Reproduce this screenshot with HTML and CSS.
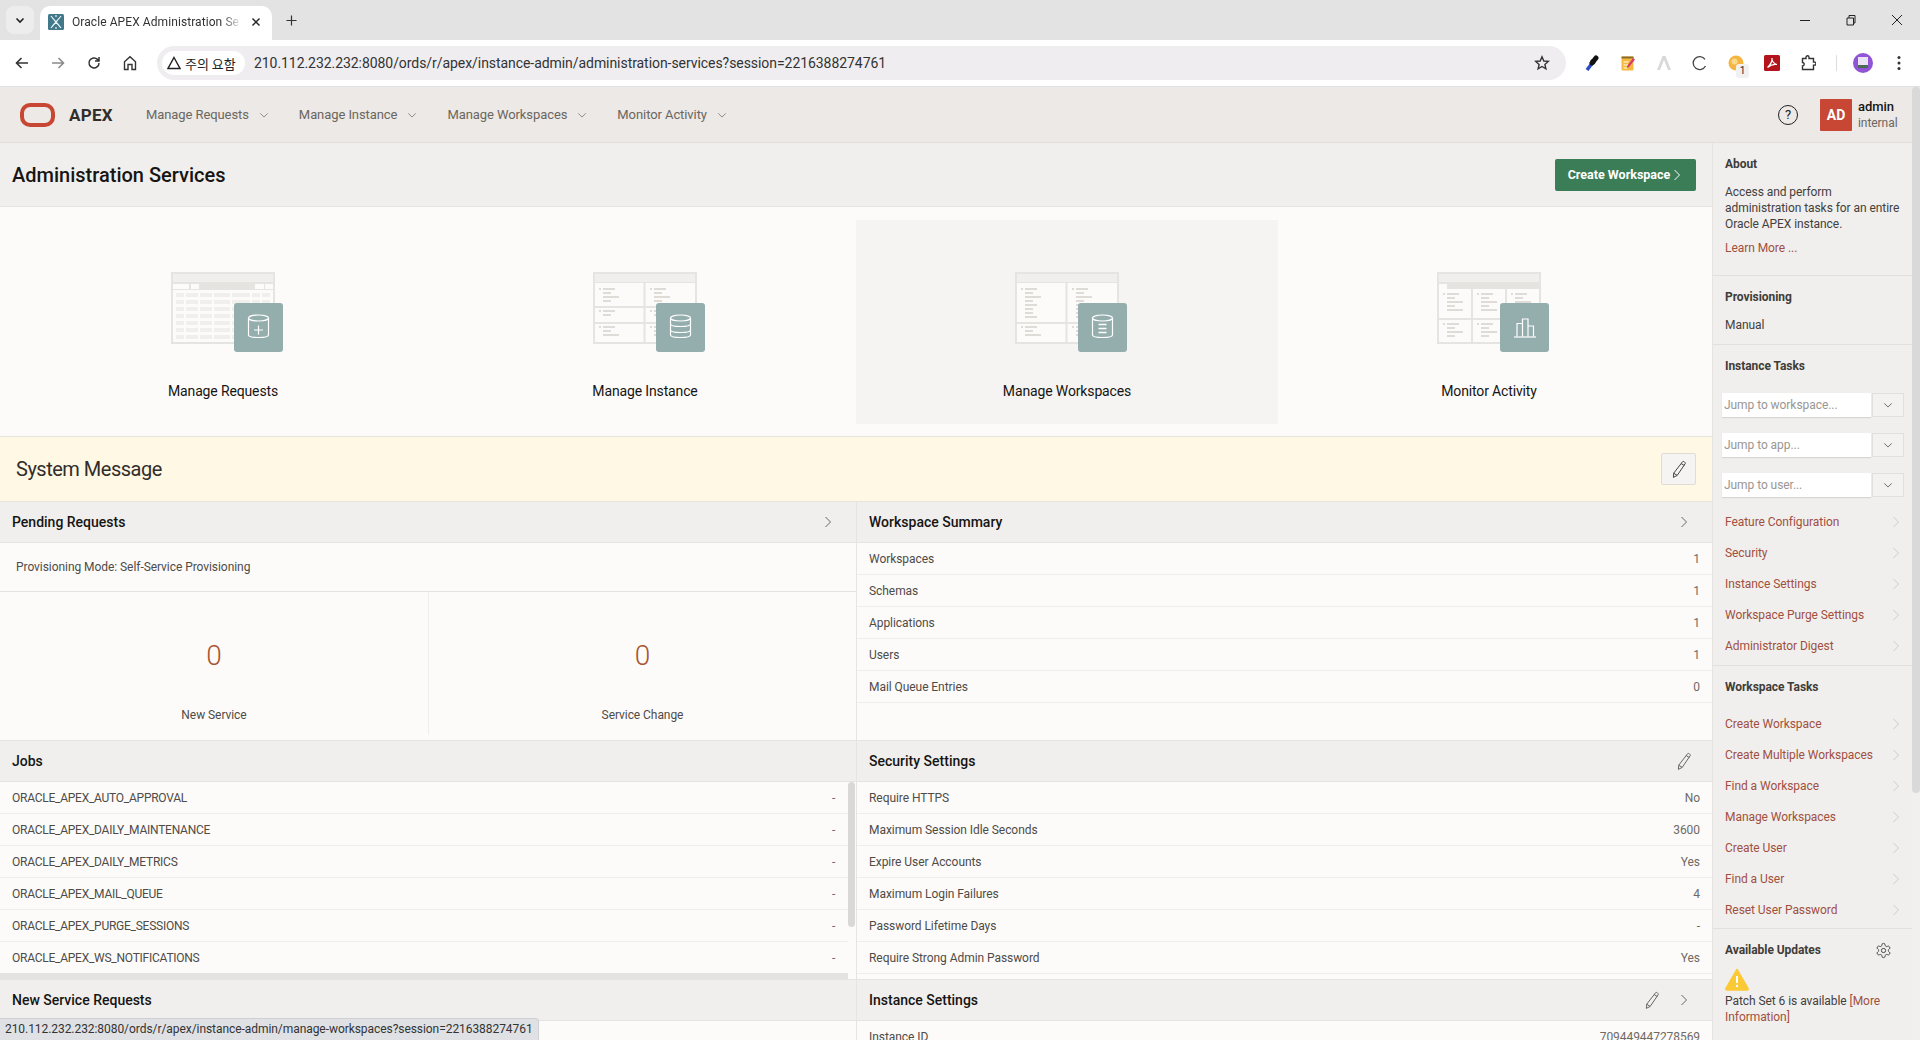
FILE: index.html
```html
<!DOCTYPE html>
<html lang="en">
<head>
<meta charset="utf-8">
<title>Oracle APEX Administration Services</title>
<link rel="stylesheet" href="styles.css">
</head>
<body>
<svg class="defs" aria-hidden="true">
  <symbol id="chev-r" viewBox="0 0 12 12"><path d="M3.500 1 8.500 6l-5 5" fill="none" stroke="currentColor" stroke-width="1"/></symbol>
  <symbol id="chev-d" viewBox="0 0 12 12"><path d="M1.500 4 6 8.500 10.500 4" fill="none" stroke="currentColor" stroke-width="1"/></symbol>
  <symbol id="pencil" viewBox="0 0 18 18"><path d="M12.700 1.600c.8-.6 2.700.5 2.600 1.900L7.200 15.400l-3.800 2 .3-4.200zM11.200 3.600l3.100 1.900M3.700 13.200l3.500 2.200" fill="none" stroke="currentColor" stroke-width="1"/></symbol>
  <g id="g-frame" fill="none">
    <rect x="1" y="1" width="102" height="70" fill="#fcfbfa" stroke="#e6e4e1" stroke-width="2"/>
    <rect x="2" y="2" width="100" height="8" fill="#f0efed"/>
    <rect x="2" y="10" width="100" height="1" fill="#e6e4e1"/>
  </g>
  <path id="l4" d="M6 17h2M10 17h12M10 21h8M10 25h16M10 29h8" fill="none" stroke="#d5d1cb" stroke-width="1.500"/>
  <path id="l2" d="M6 17h2M10 17h12M10 21h8" fill="none" stroke="#d5d1cb" stroke-width="1.500"/>
  <path id="l3" d="M6 17h2M10 17h12M10 21h8M10 25h16" fill="none" stroke="#d5d1cb" stroke-width="1.500"/>
  <path id="l5" d="M6 17h2M10 17h12M10 21h8M10 25h16M10 29h8M10 33h16" fill="none" stroke="#d5d1cb" stroke-width="1.500"/>
  <path id="l8" d="M6 17h2M10 17h12M10 21h8M10 25h16M10 29h8M10 33h12M10 37h8M10 41h8M10 45h12" fill="none" stroke="#d5d1cb" stroke-width="1.500"/>
  <rect id="badge" x="71" y="31" width="49" height="49" rx="3" fill="#94adad"/>
</svg>

<header class="tabstrip">
  <span class="tab-list"><svg class="ic12" viewBox="0 0 12 12"><path d="M2.500 4.500 6 8l3.500-3.500" fill="none" stroke="#222" stroke-width="1.600"/></svg></span>
  <div class="tab">
    <svg class="favicon" viewBox="0 0 16 16"><rect width="16" height="16" rx="1.500" fill="#41788a"/><path d="M3 2c3 4 7 8 10 12M13 2C10 6 6 10 3 14M8 1v2M8 13v2" fill="none" stroke="#e8f2f4" stroke-width="1.200"/></svg>
    <span class="tab-title">Oracle APEX Administration Se</span>
    <svg class="ic12" viewBox="0 0 12 12"><path d="M2.500 2.500l7 7M9.500 2.500l-7 7" stroke="#222" stroke-width="1.400"/></svg>
  </div>
  <svg class="newtab" viewBox="0 0 12 12"><path d="M6 .5v11M.5 6h11" stroke="#333" stroke-width="1.300"/></svg>
  <div class="winctl">
    <svg class="ic12" viewBox="0 0 12 12"><path d="M1 6.500h10" stroke="#222"/></svg>
    <svg class="ic12" viewBox="0 0 12 12"><path d="M2 4h6.500v7H2zM4 4V1.500h6V9H8.500" fill="none" stroke="#222"/></svg>
    <svg class="ic12" viewBox="0 0 12 12"><path d="M1 1l10 10M11 1 1 11" stroke="#222"/></svg>
  </div>
</header>

<div class="toolbar">
  <div class="navbtns">
    <svg class="tb-ic" viewBox="0 0 16 16"><path d="M14 8H3M7.500 3 2.500 8l5 5" fill="none" stroke="#333" stroke-width="1.600"/></svg>
    <svg class="tb-ic" viewBox="0 0 16 16"><path d="M2 8h11M8.500 3l5 5-5 5" fill="none" stroke="#8a8a8a" stroke-width="1.600"/></svg>
    <svg class="tb-ic" viewBox="0 0 16 16"><path d="M13 8a5 5 0 1 1-1.500-3.600L13 6M13 2v4H9" fill="none" stroke="#333" stroke-width="1.500"/></svg>
    <svg class="tb-ic" viewBox="0 0 16 16"><path d="M2.500 14.500V6.800L8 1.800l5.500 5v7.700H10V9.500H6v5z" fill="none" stroke="#333" stroke-width="1.400"/></svg>
  </div>
  <div class="omnibox">
    <span class="chip"><svg class="chip-ic" viewBox="0 0 14 14"><path d="M7 1.500 13 12.500H1z" fill="none" stroke="#222" stroke-width="1.400"/></svg>주의 요함</span>
    <span class="url">210.112.232.232:8080/ords/r/apex/instance-admin/administration-services?session=2216388274761</span>
    <svg class="star" viewBox="0 0 16 16"><path d="M8 1.800 9.800 6l4.500.4-3.400 3 1 4.400L8 11.500l-3.900 2.300 1-4.400-3.400-3L6.200 6z" fill="none" stroke="#333" stroke-width="1.400"/></svg>
  </div>
  <div class="exts">
    <svg class="tb-ic" viewBox="0 0 16 16"><path d="M3 15 9 7" stroke="#2a4fc4" stroke-width="3.500" fill="none"/><path d="M8 8 12 3" stroke="#111" stroke-width="5" stroke-linecap="round" fill="none"/><path d="M7 5l4 3.500" stroke="#111" stroke-width="2" fill="none"/></svg>
    <svg class="tb-ic" viewBox="0 0 16 16"><rect x="1.500" y="1.500" width="12" height="14" rx="1" fill="#f5b93e"/><path d="M1.500 1.500h12v2h-12z" fill="#8a6d2b"/><path d="M3.500 7h5M3.500 10h5M3.500 13h4" stroke="#fff"/><path d="M13 3 15 4.500 9 12l-2 1 .5-2.500z" fill="#d83b6a"/></svg>
    <svg class="tb-ic" viewBox="0 0 16 16"><path d="M6.500 1h3L15 15h-3L8 5 4 15H1z" fill="#d9d9d9"/></svg>
    <svg class="tb-ic" viewBox="0 0 16 16"><path d="M13 4.300A6.500 6.500 0 1 0 13.500 11" fill="none" stroke="#444" stroke-width="1.300"/></svg>
    <span class="ext-badged"><svg class="tb-ic" viewBox="0 0 16 16"><circle cx="8" cy="8" r="7.500" fill="#f5b53f"/><circle cx="6.500" cy="6.500" r="3" fill="#fbd98c"/></svg><span class="ext-count">1</span></span>
    <svg class="tb-ic" viewBox="0 0 16 16"><rect width="16" height="16" rx="1.500" fill="#b3131b"/><path d="M3.500 12.500C6 10 8.500 6 8 3c-.5 3 2 6 5 6.500-3-.5-6.500.5-9.500 3z" fill="none" stroke="#fff" stroke-width="1.200"/></svg>
    <svg class="tb-ic" viewBox="0 0 16 16"><path d="M2.500 3.500H6V2.200a1.500 1.500 0 0 1 3 0v1.300h4.500v3.600h1a1.500 1.500 0 0 1 0 3h-1v4.400h-11v-3.600a1.700 1.700 0 0 0 0-3.400z" fill="none" stroke="#333" stroke-width="1.400"/></svg>
    <span class="ext-sep"></span>
    <svg class="avatar-ic" viewBox="0 0 20 20"><circle cx="10" cy="10" r="10" fill="#9254d6"/><rect x="5" y="4" width="10" height="11" fill="#e9e3f5"/><rect x="5" y="12" width="10" height="3" fill="#4a6a55"/></svg>
    <svg class="tb-ic kebab" viewBox="0 0 16 16"><circle cx="8" cy="2.500" r="1.500" fill="#333"/><circle cx="8" cy="8" r="1.500" fill="#333"/><circle cx="8" cy="13.500" r="1.500" fill="#333"/></svg>
  </div>
</div>

<div class="app-header">
  <a class="brand"><span class="o-ring"></span><span class="brand-name">APEX</span></a>
  <nav class="menu">
    <a class="menu-item">Manage Requests <svg class="ic10"><use href="#chev-d"/></svg></a>
    <a class="menu-item">Manage Instance <svg class="ic10"><use href="#chev-d"/></svg></a>
    <a class="menu-item">Manage Workspaces <svg class="ic10"><use href="#chev-d"/></svg></a>
    <a class="menu-item">Monitor Activity <svg class="ic10"><use href="#chev-d"/></svg></a>
  </nav>
  <span class="help">?</span>
  <span class="user-badge">AD</span>
  <span class="user"><b>admin</b><i>internal</i></span>
</div>

<div class="shell">
  <main class="main">
    <div class="title-bar">
      <h1>Administration Services</h1>
      <button class="btn-create">Create Workspace <svg class="ic12"><use href="#chev-r"/></svg></button>
    </div>

    <div class="cards">
      <a class="card">
        <svg class="card-art" viewBox="0 0 120 80">
          <g transform="translate(8)">
            <use href="#g-frame"/>
            <rect x="2" y="11" width="100" height="7" fill="#e6e4e1"/>
            <path d="M2 14.500h16M20 14.500h8M84 14.500h9M94 14.500h8" stroke="#fcfbfa" stroke-width="5"/>
            <path d="M5 23h94M5 30h94M5 37h94M5 44h94M5 51h94M5 58h94M5 65h94" stroke="#f0efed" stroke-width="4" stroke-dasharray="8 2 12 2 12 2 16 2 18 2 8 2 8 9"/>
          </g>
          <use href="#badge"/>
          <g fill="none" stroke="#fff" stroke-width="1.200"><ellipse cx="95.500" cy="46" rx="10" ry="3"/><path d="M85.500 46v17c0 1.500 2 2.500 10 2.500s10-1 10-2.500V46M91 58h9M95.500 53.500v9"/></g>
        </svg>
        <span class="card-label">Manage Requests</span>
      </a>
      <a class="card">
        <svg class="card-art" viewBox="0 0 120 80">
          <g transform="translate(8)">
            <use href="#g-frame"/>
            <path d="M51.500 11v59M2 35h100M2 51h100" stroke="#e6e4e1" stroke-width="2"/>
            <use href="#l4"/><use href="#l4" x="51"/>
            <use href="#l2" y="22"/><use href="#l2" x="51" y="22"/>
            <use href="#l3" y="38"/><use href="#l3" x="51" y="38"/>
          </g>
          <use href="#badge"/>
          <g fill="none" stroke="#fff" stroke-width="1.200"><ellipse cx="95.500" cy="46" rx="10" ry="3"/><path d="M85.500 46v17c0 1.500 2 2.500 10 2.500s10-1 10-2.500V46M85.500 52c0 1.500 2 2.500 10 2.500s10-1 10-2.500M85.500 58c0 1.500 2 2.500 10 2.500s10-1 10-2.500"/></g>
        </svg>
        <span class="card-label">Manage Instance</span>
      </a>
      <a class="card card-hover">
        <svg class="card-art" viewBox="0 0 120 80">
          <g transform="translate(8)">
            <use href="#g-frame"/>
            <path d="M51.500 11v59M2 51h100" stroke="#e6e4e1" stroke-width="2"/>
            <use href="#l8"/><use href="#l8" x="51"/>
            <use href="#l3" y="38"/><use href="#l3" x="51" y="38"/>
          </g>
          <use href="#badge"/>
          <g fill="none" stroke="#fff" stroke-width="1.200"><ellipse cx="95.500" cy="46" rx="10" ry="3"/><path d="M85.500 46v17c0 1.500 2 2.500 10 2.500s10-1 10-2.500V46"/><path d="M91.500 52.500h8M91.500 56.500h8M91.500 60.500h8" stroke-width="1.500"/></g>
        </svg>
        <span class="card-label">Manage Workspaces</span>
      </a>
      <a class="card">
        <svg class="card-art" viewBox="0 0 120 80">
          <g transform="translate(8)">
            <use href="#g-frame"/>
            <rect x="2" y="11" width="100" height="6" fill="#e6e4e1"/>
            <rect x="2" y="12" width="8" height="5" fill="#fcfbfa"/>
            <path d="M35 17v53M69 17v53M2 47h100" stroke="#e6e4e1" stroke-width="2"/>
            <use href="#l5" y="5"/><use href="#l5" x="34" y="5"/><use href="#l5" x="68" y="5"/>
            <use href="#l4" y="35"/><use href="#l4" x="34" y="35"/>
          </g>
          <use href="#badge"/>
          <g fill="none" stroke="#fff" stroke-width="1.200"><path d="M85 65h22"/><path d="M88 64.500V51.500h5.500v13M93.500 64.500V47h5.500v17.500M99 64.500V54h5.500v10.500"/></g>
        </svg>
        <span class="card-label">Monitor Activity</span>
      </a>
    </div>

    <div class="sysmsg">
      <h2>System Message</h2>
      <button class="btn-edit"><svg class="ic18"><use href="#pencil"/></svg></button>
    </div>

    <div class="panels">
      <section class="panel">
        <div class="panel-head"><h3>Pending Requests</h3><svg class="ic12 muted"><use href="#chev-r"/></svg></div>
        <p class="prov-mode">Provisioning Mode: Self-Service Provisioning</p>
        <div class="stats">
          <div class="stat"><span class="stat-num">0</span><span class="stat-label">New Service</span></div>
          <div class="stat"><span class="stat-num">0</span><span class="stat-label">Service Change</span></div>
        </div>
      </section>

      <section class="panel">
        <div class="panel-head"><h3>Workspace Summary</h3><svg class="ic12 muted"><use href="#chev-r"/></svg></div>
        <ul class="rows">
          <li>Workspaces<span>1</span></li>
          <li>Schemas<span>1</span></li>
          <li>Applications<span>1</span></li>
          <li>Users<span>1</span></li>
          <li>Mail Queue Entries<span>0</span></li>
        </ul>
      </section>

      <section class="panel panel-scroll">
        <div class="panel-head"><h3>Jobs</h3></div>
        <ul class="rows rows-jobs">
          <li>ORACLE_APEX_AUTO_APPROVAL<span>-</span></li>
          <li>ORACLE_APEX_DAILY_MAINTENANCE<span>-</span></li>
          <li>ORACLE_APEX_DAILY_METRICS<span>-</span></li>
          <li>ORACLE_APEX_MAIL_QUEUE<span>-</span></li>
          <li>ORACLE_APEX_PURGE_SESSIONS<span>-</span></li>
          <li>ORACLE_APEX_WS_NOTIFICATIONS<span>-</span></li>
        </ul>
        <span class="vthumb"></span>
        <span class="hthumb"></span>
      </section>

      <section class="panel">
        <div class="panel-head"><h3>Security Settings</h3><svg class="ic18 muted pencil-end"><use href="#pencil"/></svg></div>
        <ul class="rows">
          <li>Require HTTPS<span>No</span></li>
          <li>Maximum Session Idle Seconds<span>3600</span></li>
          <li>Expire User Accounts<span>Yes</span></li>
          <li>Maximum Login Failures<span>4</span></li>
          <li>Password Lifetime Days<span>-</span></li>
          <li>Require Strong Admin Password<span>Yes</span></li>
        </ul>
      </section>

      <section class="panel">
        <div class="panel-head"><h3>New Service Requests</h3></div>
      </section>

      <section class="panel">
        <div class="panel-head"><h3>Instance Settings</h3><span class="head-actions"><svg class="ic18 muted"><use href="#pencil"/></svg><svg class="ic12 muted"><use href="#chev-r"/></svg></span></div>
        <ul class="rows">
          <li>Instance ID<span>709449447278569</span></li>
        </ul>
      </section>
    </div>
  </main>

  <aside class="side">
    <section class="side-sec sec-about">
      <h4>About</h4>
      <p>Access and perform administration tasks for an entire Oracle APEX instance.</p>
      <a class="learn">Learn More ...</a>
    </section>
    <section class="side-sec sec-prov">
      <h4>Provisioning</h4>
      <p>Manual</p>
    </section>
    <section class="side-sec sec-inst">
      <h4>Instance Tasks</h4>
      <div class="jumps">
        <div class="jump"><span class="jump-field">Jump to workspace...</span><span class="jump-btn"><svg class="ic10"><use href="#chev-d"/></svg></span></div>
        <div class="jump"><span class="jump-field">Jump to app...</span><span class="jump-btn"><svg class="ic10"><use href="#chev-d"/></svg></span></div>
        <div class="jump"><span class="jump-field">Jump to user...</span><span class="jump-btn"><svg class="ic10"><use href="#chev-d"/></svg></span></div>
      </div>
      <ul class="links">
        <li>Feature Configuration<svg class="ic12"><use href="#chev-r"/></svg></li>
        <li>Security<svg class="ic12"><use href="#chev-r"/></svg></li>
        <li>Instance Settings<svg class="ic12"><use href="#chev-r"/></svg></li>
        <li>Workspace Purge Settings<svg class="ic12"><use href="#chev-r"/></svg></li>
        <li>Administrator Digest<svg class="ic12"><use href="#chev-r"/></svg></li>
      </ul>
    </section>
    <section class="side-sec sec-work">
      <h4>Workspace Tasks</h4>
      <ul class="links">
        <li>Create Workspace<svg class="ic12"><use href="#chev-r"/></svg></li>
        <li>Create Multiple Workspaces<svg class="ic12"><use href="#chev-r"/></svg></li>
        <li>Find a Workspace<svg class="ic12"><use href="#chev-r"/></svg></li>
        <li>Manage Workspaces<svg class="ic12"><use href="#chev-r"/></svg></li>
        <li>Create User<svg class="ic12"><use href="#chev-r"/></svg></li>
        <li>Find a User<svg class="ic12"><use href="#chev-r"/></svg></li>
        <li>Reset User Password<svg class="ic12"><use href="#chev-r"/></svg></li>
      </ul>
    </section>
    <section class="side-sec sec-upd">
      <div class="upd-head"><h4>Available Updates</h4>
        <svg class="gear" viewBox="0 0 24 24"><path d="M12.220 2h-.44a2 2 0 0 0-2 2v.18a2 2 0 0 1-1 1.730l-.43.25a2 2 0 0 1-2 0l-.15-.08a2 2 0 0 0-2.730.73l-.22.38a2 2 0 0 0 .73 2.730l.15.1a2 2 0 0 1 1 1.720v.51a2 2 0 0 1-1 1.740l-.15.09a2 2 0 0 0-.73 2.730l.22.38a2 2 0 0 0 2.730.73l.15-.08a2 2 0 0 1 2 0l.43.25a2 2 0 0 1 1 1.730V20a2 2 0 0 0 2 2h.44a2 2 0 0 0 2-2v-.18a2 2 0 0 1 1-1.730l.43-.25a2 2 0 0 1 2 0l.15.08a2 2 0 0 0 2.730-.73l.22-.39a2 2 0 0 0-.73-2.730l-.15-.08a2 2 0 0 1-1-1.740v-.5a2 2 0 0 1 1-1.740l.15-.09a2 2 0 0 0 .73-2.730l-.22-.38a2 2 0 0 0-2.730-.73l-.15.08a2 2 0 0 1-2 0l-.43-.25a2 2 0 0 1-1-1.730V4a2 2 0 0 0-2-2z" fill="none" stroke="#403c38" stroke-width="1.300"/><circle cx="12" cy="12" r="3" fill="none" stroke="#403c38" stroke-width="1.300"/></svg>
      </div>
      <svg class="warn" viewBox="0 0 24 24"><path d="M12 2.500 23 21.500a1 1 0 0 1-1 1.500H2a1 1 0 0 1-1-1.500z" fill="#fbc935" stroke="#fbc935" stroke-linejoin="round" stroke-width="1.500"/><path d="M12 9v7" stroke="#fff" stroke-width="2"/><circle cx="12" cy="19" r="1.200" fill="#fff"/></svg>
      <p class="upd-text">Patch Set 6 is available <span class="upd-link">[More Information]</span></p>
    </section>
  </aside>
  <span class="page-track"></span>
</div>

<span class="page-thumb"></span>
<div class="status-bubble">210.112.232.232:8080/ords/r/apex/instance-admin/manage-workspaces?session=2216388274761</div>
</body>
</html>
```

FILE: styles.css
```css
* { box-sizing: border-box; }
html, body { margin: 0; height: 100%; overflow: hidden; }
body {
  display: flex; flex-direction: column; height: 1040px; position: relative;
  font-family: "Roboto", "Noto Sans", "Noto Sans CJK KR", sans-serif;
  font-size: 12px; color: #4f4b47; background: #fcfbfa; letter-spacing: -0.06px;
}
h1, h2, h3, h4, p, ul { margin: 0; padding: 0; }
ul { list-style: none; }
button { font: inherit; cursor: pointer; }
.defs { width: 0; height: 0; position: absolute; }
.ic10 { width: 10px; height: 10px; flex: none; }
.ic12 { width: 12px; height: 12px; flex: none; }
.ic18 { width: 18px; height: 18px; flex: none; }
.muted { color: #6b6660; }

/* browser chrome */
.tabstrip { height: 40px; background: #e3e3e3; display: flex; align-items: flex-end; padding-left: 6px; flex: none; }
.tab-list { width: 28px; height: 28px; margin-bottom: 6px; border-radius: 8px; background: #ededed; display: flex; align-items: center; justify-content: center; }
.tab { width: 232px; height: 34px; margin-left: 6px; background: #fff; border-radius: 10px 10px 0 0; display: flex; align-items: center; padding: 0 10px 2px 8px; gap: 8px; color: #333; }
.favicon { width: 16px; height: 16px; flex: none; }
.tab-title { flex: 1; white-space: nowrap; overflow: hidden; letter-spacing: .08px; -webkit-mask-image: linear-gradient(90deg, #000 88%, transparent); mask-image: linear-gradient(90deg, #000 88%, transparent); }
.newtab { width: 11px; height: 11px; margin: 0 0 14px 14px; }
.winctl { margin-left: auto; align-self: flex-start; display: flex; gap: 34px; padding: 14px 17px 0 0; }
.toolbar { height: 47px; background: #fff; display: flex; align-items: center; border-bottom: 1px solid #e0e0e0; padding-left: 14px; flex: none; }
.navbtns { display: flex; gap: 20px; }
.tb-ic { width: 16px; height: 16px; flex: none; display: block; }
.omnibox { width: 1409px; height: 34px; margin-left: 19px; background: #efedf0; border-radius: 17px; display: flex; align-items: center; padding-left: 5px; }
.chip { height: 24px; width: 83px; background: #fff; border-radius: 12px; display: flex; align-items: center; padding-left: 5px; gap: 4px; font-family: "Noto Sans CJK KR", sans-serif; font-size: 13px; color: #222; letter-spacing: 0; white-space: nowrap; }
.chip-ic { width: 14px; height: 14px; flex: none; }
.url { margin-left: 9px; font-size: 14px; color: #333; letter-spacing: -0.06px; }
.star { width: 16px; height: 16px; margin-left: auto; margin-right: 16px; }
.exts { display: flex; align-items: center; gap: 20px; margin-left: 18px; }
.ext-badged { position: relative; display: block; }
.ext-count { position: absolute; left: 8px; top: 9px; width: 13px; height: 14px; background: #f1f1f1; border-radius: 3px; font-size: 10px; text-align: center; color: #222; line-height: 14px; }
.ext-sep { width: 1px; height: 16px; background: #ddd; margin-right: -4px; }
.avatar-ic { width: 20px; height: 20px; flex: none; }
.kebab { margin-left: -2px; }

/* app header */
.app-header { height: 56px; flex: none; background: #ece9e6; border-bottom: 1px solid #e2dfdb; display: flex; align-items: center; padding: 0 20px 0 20px; }
.brand { display: flex; align-items: center; gap: 14px; }
.o-ring { width: 35px; height: 24px; border: 4px solid #c74634; border-radius: 10px; flex: none; }
.brand-name { font-size: 17px; font-weight: 700; color: #312d2a; letter-spacing: .3px; }
.menu { display: flex; gap: 30px; margin-left: 33px; }
.menu-item { font-size: 13px; color: #6b6660; display: flex; align-items: center; gap: 10px; letter-spacing: -0.08px; }
.menu-item .ic10 { color: #7d7872; }
.help { margin-left: auto; width: 20px; height: 20px; border: 1.500px solid #222; border-radius: 50%; font-size: 13px; display: flex; align-items: center; justify-content: center; color: #222; }
.user-badge { margin-left: 22px; width: 32px; height: 32px; background: #c74634; color: #fff; font-weight: 700; font-size: 14px; display: flex; align-items: center; justify-content: center; border-radius: 1px; }
.user { margin-left: 6px; display: flex; flex-direction: column; line-height: 16px; width: 42px; }
.user b { font-weight: 500; font-size: 13px; color: #161513; }
.user i { font-style: normal; color: #6b6660; font-size: 12px; }

/* shell */
.shell { flex: 1; display: flex; min-height: 0; position: relative; }
.main { width: 1712px; flex: none; display: flex; flex-direction: column; min-height: 0; }
.title-bar { height: 64px; flex: none; background: #f0efed; border-bottom: 1px solid #e6e4e1; display: flex; align-items: center; justify-content: space-between; padding: 4px 16px 4px 12px; }
h1 { font-size: 20px; font-weight: 500; color: #161513; letter-spacing: 0; }
.btn-create { height: 32px; width: 141px; background: #3a7d56; border: 0; border-radius: 2px; color: #fff; font-weight: 700; font-size: 12.500px; display: flex; align-items: center; justify-content: center; gap: 1px; letter-spacing: 0; }

.cards { display: grid; grid-template-columns: repeat(4, 422px); padding: 13px 12px 12px; flex: none; }
.card { height: 204px; display: flex; flex-direction: column; align-items: center; padding-top: 52px; }
.card-hover { background: #f5f4f2; }
.card-art { width: 120px; height: 80px; display: block; }
.card-label { margin-top: 29px; font-size: 14px; color: #161513; line-height: 20px; letter-spacing: -0.14px; }

.sysmsg { height: 65px; flex: none; background: #fff8e5; border-top: 1px solid #e6e4e1; display: flex; align-items: center; justify-content: space-between; padding: 0 16px; }
h2 { font-size: 20px; font-weight: 400; color: #312d2a; letter-spacing: -0.5px; }
.btn-edit { width: 35px; height: 32px; background: #f5f4f2; border: 1px solid #dfdcd8; border-radius: 2px; display: flex; align-items: center; justify-content: center; color: #444; padding: 0; }

.panels { display: grid; grid-template-columns: 856px 856px; grid-template-rows: 239px 239px 1fr; min-height: 0; flex: 1; }
.panel { position: relative; display: flex; flex-direction: column; overflow: hidden; min-height: 0; }
.panel:nth-child(even) { border-left: 1px solid #e6e4e1; }
.panel-head { height: 42px; flex: none; background: #f0efed; border-top: 1px solid #e6e4e1; border-bottom: 1px solid #e6e4e1; display: flex; align-items: center; justify-content: space-between; padding: 0 22px 0 12px; }
.pencil-end { margin-right: -3px; }
h3 { font-size: 14px; font-weight: 500; color: #161513; letter-spacing: 0; }
.head-actions { display: flex; align-items: center; gap: 17px; }
.prov-mode { height: 49px; flex: none; display: flex; align-items: center; padding-left: 16px; border-bottom: 1px solid #e6e4e1; }
.stats { flex: 1; display: grid; grid-template-columns: 428px 428px; padding-bottom: 5px; }
.stat { display: flex; flex-direction: column; align-items: center; padding-top: 44px; }
.stat + .stat { border-left: 1px solid #f0efed; }
.stat-num { font-size: 28px; line-height: 40px; color: #a9532f; font-weight: 300; }
.stat-label { margin-top: 29px; line-height: 20px; }
.rows li { height: 32px; display: flex; align-items: center; justify-content: space-between; padding: 0 12px; border-bottom: 1px solid #efeeec; white-space: nowrap; }
.rows li span { color: #6f6a64; }
.rows-jobs { width: 848px; letter-spacing: -0.25px; }
.rows-jobs li { padding-right: 13px; }
.vthumb { position: absolute; left: 848px; top: 42px; width: 7px; height: 145px; border-radius: 4px; background: #d9d8d6; }
.hthumb { position: absolute; left: 0; top: 233px; width: 848px; height: 6px; background: #e4e3e1; }

/* side */
.side { width: 200px; flex: none; background: #f0efed; border-left: 1px solid #e6e4e1; display: flex; flex-direction: column; overflow: hidden; line-height: 16px; }
.side-sec { padding: 0 12px; border-bottom: 1px solid #e2e0dd; flex: none; }
.side-sec h4 { font-size: 12px; font-weight: 700; color: #403c38; line-height: 16px; }
.sec-about { height: 133px; padding: 13px 8px 0 12px; }
.sec-about p { margin-top: 12px; color: #44403c; }
.learn { display: block; margin-top: 8px; color: #a0503f; }
.sec-prov { height: 69px; padding-top: 13px; }
.sec-prov p { margin-top: 12px; color: #44403c; }
.sec-inst { height: 321px; padding-top: 13px; padding-right: 8px; }
.jumps { display: flex; flex-direction: column; gap: 16px; margin: 19px 0 9px -3px; }
.jump { display: flex; gap: 1px; height: 24px; }
.jump-field { width: 150px; background: #fff; color: #9a9691; padding-left: 2px; display: flex; align-items: center; box-shadow: 0 1px 1px #d9d7d4; }
.jump-btn { width: 32px; background: #f3f2f0; border: 1px solid #e2e0dd; display: flex; align-items: center; justify-content: center; color: #555; }
.links li { height: 31px; display: flex; align-items: center; justify-content: space-between; color: #a0503f; padding-right: 2px; }
.links .ic12 { color: #cfccc8; }
.sec-work { height: 263px; padding-top: 13px; padding-right: 8px; }
.sec-work .links { margin-top: 13px; }
.sec-upd { border-bottom: 0; padding-top: 13px; }
.upd-head { display: flex; justify-content: space-between; align-items: center; padding-right: 8px; height: 16px; }
.gear { width: 17px; height: 17px; }
.warn { width: 24px; height: 24px; display: block; margin-top: 9px; }
.upd-text { color: #44403c; margin-top: 2px; }
.upd-link { color: #a0503f; }
.page-track { width: 8px; background: #f1f0ee; flex: none; }
.page-thumb { position: absolute; right: 0; top: 87px; width: 8px; height: 706px; background: #d9d9d9; border-radius: 4px; }

.status-bubble { position: absolute; left: 0; bottom: 0; height: 22px; width: 539px; background: #dfe1e5; border-top: 1px solid #cfd0d3; border-right: 1px solid #cfd0d3; border-top-right-radius: 4px; padding: 0 5px; line-height: 21px; color: #333; white-space: nowrap; overflow: hidden; }
```
